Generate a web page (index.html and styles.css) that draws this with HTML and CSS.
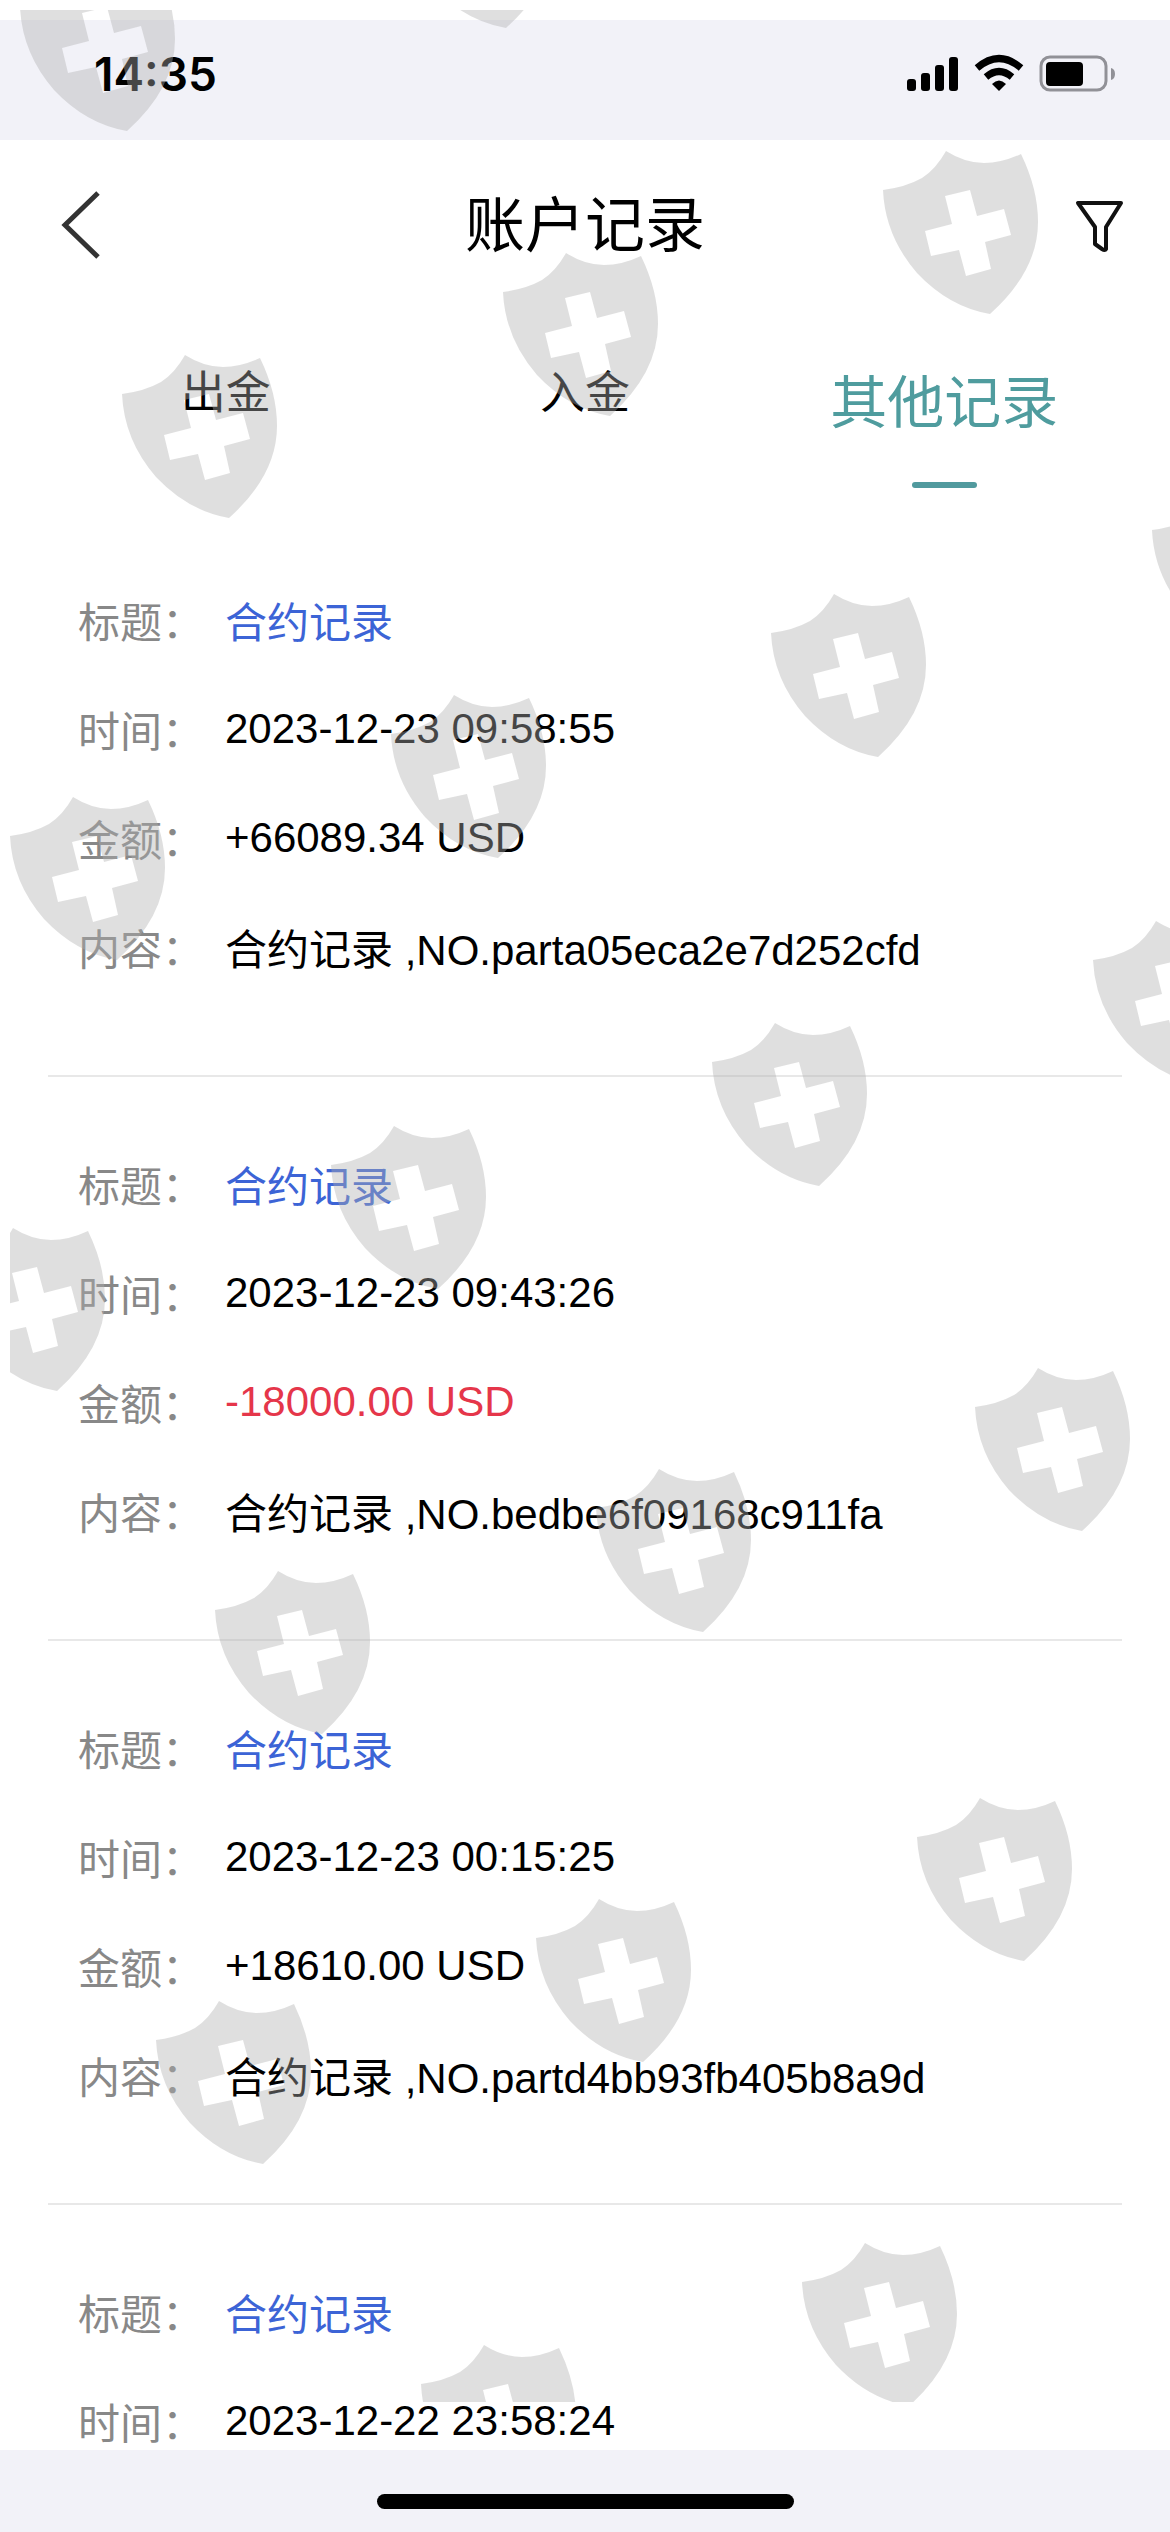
FILE: index.html
```html
<!DOCTYPE html>
<html lang="zh-CN">
<head>
    <meta charset="UTF-8">
    <meta name="viewport" content="width=device-width, initial-scale=1.0">
    <title>账户记录</title>
    <link rel="stylesheet" href="styles.css">
</head>
<body>
    <div class="status-bar">
        <span class="time">14:35</span>
        <svg class="status-icons" width="210" height="40" viewBox="0 0 210 40">
            <!-- signal -->
            <rect x="1" y="25" width="9" height="12" rx="3"/>
            <rect x="15" y="19" width="9" height="18" rx="3"/>
            <rect x="29" y="11" width="9" height="26" rx="3"/>
            <rect x="43" y="3" width="9" height="34" rx="3"/>
            <!-- wifi -->
            <g fill="none" stroke="#000" stroke-width="7">
                <path d="M71 14 Q93 -5 115 14"/>
                <path d="M80 23 Q93 12 106 23"/>
            </g>
            <path d="M86 30 Q93 23 100 30 L93 37 Z"/>
            <!-- battery -->
            <rect x="135" y="3" width="65" height="33" rx="9" fill="none" stroke="#919197" stroke-width="3"/>
            <rect x="140" y="8" width="37" height="24" rx="4"/>
            <path d="M205 14 Q209 15 209 20 Q209 25 205 26 Z" fill="#919197"/>
        </svg>
    </div>

    <header class="header">
        <button type="button" class="icon-btn" aria-label="返回">
            <svg width="54" height="80" viewBox="0 0 54 80">
                <path d="M52 13 L19 45 L52 77" fill="none" stroke="#333" stroke-width="5"/>
            </svg>
        </button>
        <h1>账户记录</h1>
        <button type="button" class="icon-btn" aria-label="筛选">
            <svg width="54" height="80" viewBox="0 0 54 80">
                <path d="M8 23 H51 L36 47 V69 Q35 71 32 69 L25 64 V47 Z" fill="none" stroke="#111" stroke-width="4" stroke-linejoin="round"/>
            </svg>
        </button>
    </header>

    <nav class="tabs">
        <button type="button" class="tab">出金</button>
        <button type="button" class="tab">入金</button>
        <button type="button" class="tab active">其他记录</button>
    </nav>

    <main class="records">
        <dl class="record">
            <div class="row"><dt>标题：</dt><dd class="link">合约记录</dd></div>
            <div class="row"><dt>时间：</dt><dd>2023-12-23 09:58:55</dd></div>
            <div class="row"><dt>金额：</dt><dd>+66089.34 USD</dd></div>
            <div class="row"><dt>内容：</dt><dd>合约记录 ,NO.parta05eca2e7d252cfd</dd></div>
        </dl>
        <dl class="record">
            <div class="row"><dt>标题：</dt><dd class="link">合约记录</dd></div>
            <div class="row"><dt>时间：</dt><dd>2023-12-23 09:43:26</dd></div>
            <div class="row"><dt>金额：</dt><dd class="minus">-18000.00 USD</dd></div>
            <div class="row"><dt>内容：</dt><dd>合约记录 ,NO.bedbe6f09168c911fa</dd></div>
        </dl>
        <dl class="record">
            <div class="row"><dt>标题：</dt><dd class="link">合约记录</dd></div>
            <div class="row"><dt>时间：</dt><dd>2023-12-23 00:15:25</dd></div>
            <div class="row"><dt>金额：</dt><dd>+18610.00 USD</dd></div>
            <div class="row"><dt>内容：</dt><dd>合约记录 ,NO.partd4bb93fb405b8a9d</dd></div>
        </dl>
        <dl class="record">
            <div class="row"><dt>标题：</dt><dd class="link">合约记录</dd></div>
            <div class="row"><dt>时间：</dt><dd>2023-12-22 23:58:24</dd></div>
        </dl>
    </main>

    <footer class="home-bar"><span class="home-indicator"></span></footer>

    <!-- shield watermark over the whole page -->
    <div class="watermark" aria-hidden="true">
        <svg width="1160" height="2392" viewBox="10 10 1160 2392">
            <defs>
                <path id="shield" fill-rule="evenodd" d="M0 39 Q23 36 39 27 Q53 18 63 0 Q82 12 101 12 Q119 12 138 3 Q155 38 155 71 Q155 120 107 163 Q66 156 34 122 Q2 85 0 39 Z
                    M62 45 L87 39 L94 65 L121 58 L128 84 L102 91 L108 118 L83 125 L76 99 L48 105 L42 80 L69 73 Z"/>
            </defs>
            <use href="#shield" x="20" y="-32"/>
            <use href="#shield" x="399" y="-135"/>
            <use href="#shield" x="883" y="151"/>
            <use href="#shield" x="503" y="253"/>
            <use href="#shield" x="122" y="355"/>
            <use href="#shield" x="1152" y="491"/>
            <use href="#shield" x="771" y="594"/>
            <use href="#shield" x="391" y="695"/>
            <use href="#shield" x="10" y="797"/>
            <use href="#shield" x="1093" y="921"/>
            <use href="#shield" x="712" y="1023"/>
            <use href="#shield" x="331" y="1126"/>
            <use href="#shield" x="-50" y="1228"/>
            <use href="#shield" x="975" y="1368"/>
            <use href="#shield" x="596" y="1469"/>
            <use href="#shield" x="215" y="1571"/>
            <use href="#shield" x="917" y="1798"/>
            <use href="#shield" x="536" y="1899"/>
            <use href="#shield" x="156" y="2001"/>
            <use href="#shield" x="802" y="2243"/>
            <use href="#shield" x="421" y="2345"/>
        </svg>
    </div>
</body>
</html>
```
FILE: styles.css
```css
* {
    box-sizing: border-box;
}
body {
    position: relative;
    display: flex;
    flex-direction: column;
    height: 100vh;
    margin: 0;
    padding-top: 20px;
    overflow: hidden;
    background-color: #fff;
    color: #000;
    font-family: "Liberation Sans", "Noto Sans CJK SC", sans-serif;
    font-size: 42px;
}
button {
    padding: 0;
    border: none;
    background: none;
    color: inherit;
    font-family: inherit;
    cursor: pointer;
}
.status-bar {
    display: flex;
    flex: none;
    justify-content: space-between;
    align-items: center;
    height: 120px;
    padding: 0 54px 12px 94px;
    background-color: #f2f2f8;
}
.time {
    font-family: Inter, sans-serif;
    font-size: 46px;
    font-weight: 600;
}
.header {
    display: flex;
    flex: none;
    justify-content: space-between;
    align-items: center;
    height: 160px;
    padding: 0 46px;
}
.header h1 {
    margin: 0;
    font-size: 60px;
    font-weight: 400;
}
.icon-btn svg {
    display: block;
}
.tabs {
    display: grid;
    flex: none;
    grid-template-columns: repeat(3, 1fr);
    align-items: start;
    height: 213px;
    padding: 57px 46px 0;
}
.tab {
    font-size: 45px;
}
.tab.active {
    color: #4f9c9e;
    font-size: 57px;
}
.tab.active::after {
    content: "";
    display: block;
    width: 65px;
    height: 6px;
    margin: 43px auto 0;
    border-radius: 3px;
    background-color: #519a9e;
}
.records {
    flex: 1;
    min-height: 0;
    padding: 0 48px;
    overflow: hidden;
}
.record {
    margin: 0;
    padding: 52px 30px 74px;
    border-bottom: 2px solid #e8e8e8;
}
.row {
    display: flex;
    align-items: center;
    height: 109px;
}
.row dt {
    width: 147px;
    color: #888;
}
.row dd {
    margin: 0;
}
.row .link {
    color: #3c64d6;
}
.row .minus {
    color: #e5364a;
}
.home-bar {
    display: flex;
    flex: none;
    justify-content: center;
    align-items: center;
    height: 82px;
    padding-top: 20px;
    background-color: #f2f2f8;
}
.home-indicator {
    width: 417px;
    height: 15px;
    border-radius: 8px;
    background-color: #000;
}
.watermark {
    position: absolute;
    top: 10px;
    right: 0;
    bottom: 130px;
    left: 10px;
    overflow: hidden;
    pointer-events: none;
}
.watermark svg {
    display: block;
    fill: #afafaf;
    fill-opacity: 0.4;
}
```
